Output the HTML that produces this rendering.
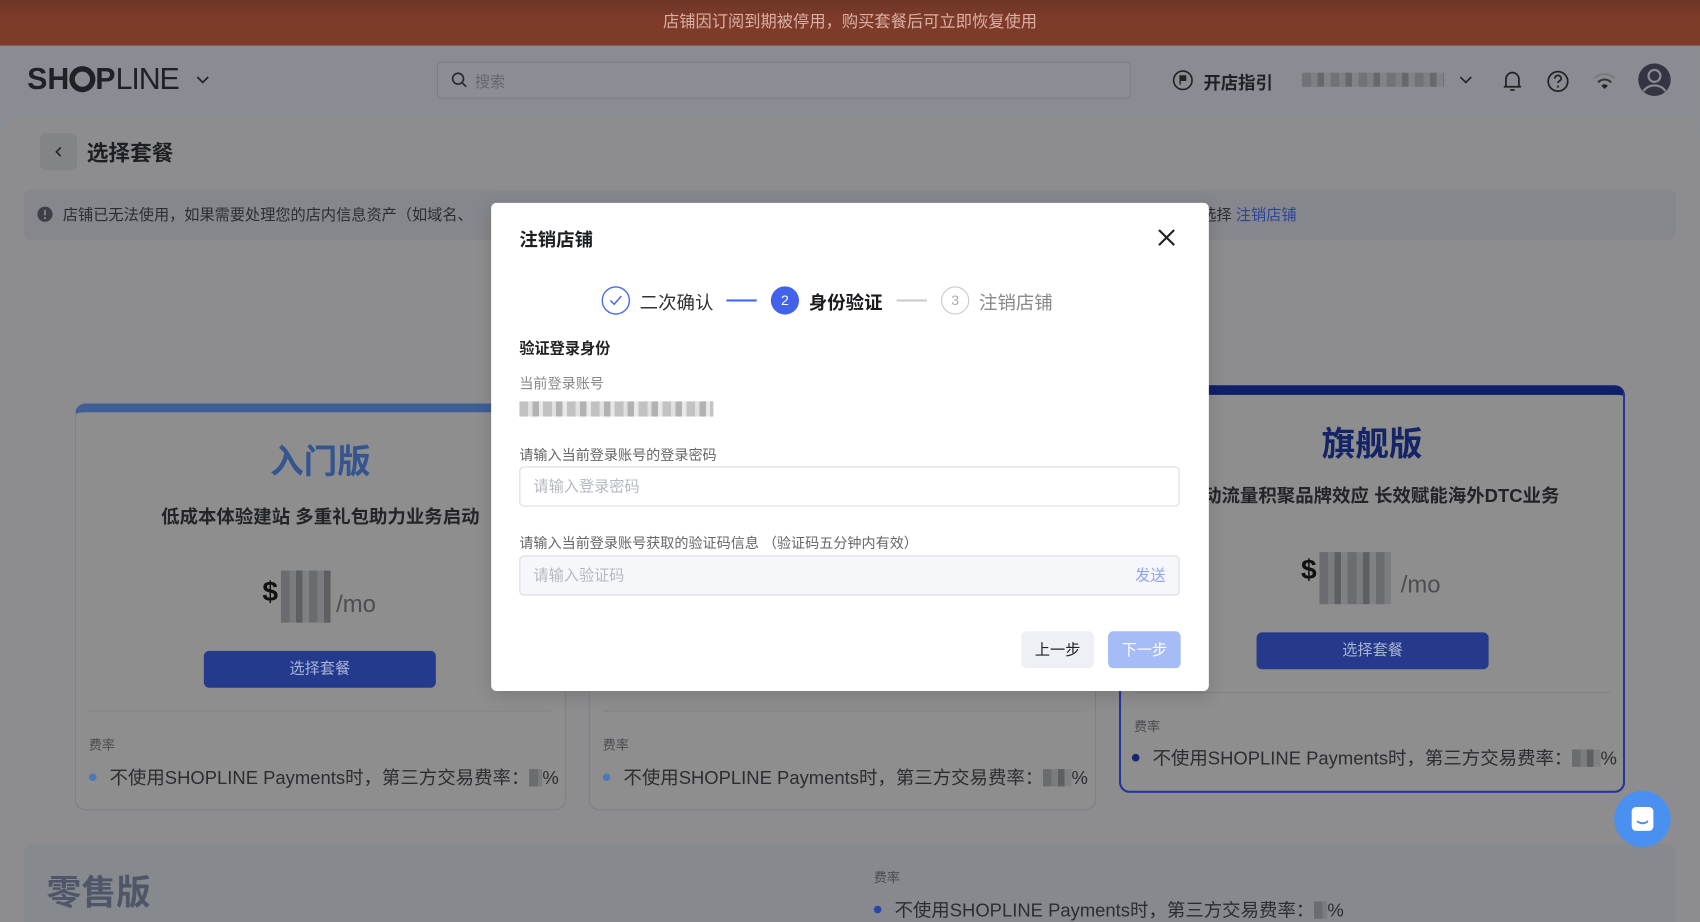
<!DOCTYPE html>
<html><head><meta charset="utf-8"><style>
*{box-sizing:border-box;margin:0;padding:0}
html,body{width:1700px;height:922px;overflow:hidden;background:#8b8c8f}
body{font-family:"Liberation Sans","Noto Sans CJK SC",sans-serif}
#w{position:absolute;left:0;top:0;width:1568px;height:850px;transform:scale(1.08418,1.08471);transform-origin:0 0;background:#8a8c93;overflow:hidden}
.a{position:absolute}
.blur{background:repeating-linear-gradient(90deg,#6b6c70 0 8px,#7b7c80 8px 14px,#5e5f63 14px 20px,#808185 20px 26px)}
.card{position:absolute;background:#8e8e8e;border:1px solid #7e7f83;border-radius:10px;overflow:hidden}
.ttl{position:absolute;width:100%;text-align:center;font-weight:bold;white-space:nowrap}
.btn{position:absolute;background:#263b8c;border-radius:5px;color:#a9b3d6;font-size:14px;text-align:center;line-height:33px}
.fee{position:absolute;font-size:12px;color:#4a4b4f}
.li{position:absolute;font-size:17px;color:#2c2d31;white-space:nowrap}
.dot{display:inline-block;width:7px;height:7px;border-radius:50%;margin-right:12px;vertical-align:3px}
.in{position:absolute;left:26px;width:609px;height:37px;border:1px solid #d8dbe3;border-radius:4px;font-size:14px;color:#b5b8c0;padding-left:12px;line-height:35px}
</style></head><body><div id="w">
<div class="a" style="left:0;top:0;width:1568px;height:42px;background:linear-gradient(#6e3526,#7e3b2a 40%);color:#d9b0a4;font-size:15px;text-align:center;line-height:42px">店铺因订阅到期被停用，购买套餐后可立即恢复使用</div>
<div class="a" style="left:25px;top:57px;font-size:28px;font-weight:bold;color:#1f2126">SH<span style="display:inline-block;width:24px;height:24px;border-radius:50%;border:5px solid #1f2126;vertical-align:-3px"></span>P<span style="font-weight:normal;letter-spacing:-1px">LINE</span></div>
<svg class="a" style="left:180px;top:68px" width="14" height="12"><path d="M2 3l5 5 5-5" fill="none" stroke="#222" stroke-width="1.6"/></svg>
<div class="a" style="left:403px;top:57px;width:640px;height:34px;border:1px solid #7c7e86;border-radius:4px;background:#8c8e95"></div>
<svg class="a" style="left:416px;top:66px" width="16" height="16"><circle cx="6.5" cy="6.5" r="5" fill="none" stroke="#2a2c31" stroke-width="1.6"/><path d="M10 10l4 4" stroke="#2a2c31" stroke-width="1.6"/></svg>
<div class="a" style="left:438px;top:65px;font-size:14px;color:#65676d">搜索</div>
<svg class="a" style="left:1081px;top:64px" width="20" height="20"><circle cx="10" cy="10" r="8.5" fill="none" stroke="#222" stroke-width="1.5"/><path d="M7.5 14V6h5v4h-5" fill="#222" stroke="#222" stroke-width="1.3"/></svg>
<div class="a" style="left:1110px;top:63px;font-size:16px;color:#1f2126;font-weight:bold">开店指引</div>
<div class="a blur" style="left:1201px;top:67px;width:131px;height:13px;opacity:.8"></div>
<svg class="a" style="left:1345px;top:68px" width="14" height="12"><path d="M2 3l5 5 5-5" fill="none" stroke="#222" stroke-width="1.5"/></svg>
<svg class="a" style="left:1384px;top:63px" width="22" height="24"><path d="M5 17V10a6 6 0 0112 0v7H5zM3 17h16M9 20h4M11 3v1" fill="none" stroke="#222" stroke-width="1.6"/></svg>
<svg class="a" style="left:1426px;top:64px" width="22" height="22"><circle cx="11" cy="11" r="9" fill="none" stroke="#222" stroke-width="1.6"/><path d="M8 8.5a3 3 0 116 0c0 2-3 2-3 4" fill="none" stroke="#222" stroke-width="1.6"/><circle cx="11" cy="15.8" r="1" fill="#222"/></svg>
<svg class="a" style="left:1469px;top:66px" width="22" height="18"><path d="M2 6a13 13 0 0118 0" fill="none" stroke="#777" stroke-width="1.6"/><path d="M5 10a8 8 0 0112 0" fill="none" stroke="#333" stroke-width="1.8"/><path d="M8 13l3 3 3-3a4 4 0 00-6 0z" fill="#222"/></svg>
<svg class="a" style="left:1510px;top:57px" width="32" height="33"><circle cx="16" cy="16.5" r="15" fill="#333642"/><circle cx="16" cy="13" r="5.5" fill="none" stroke="#8a8c93" stroke-width="2"/><path d="M6 27a11 9 0 0120 0" fill="none" stroke="#8a8c93" stroke-width="2"/></svg>
<div class="a" style="left:0;top:106px;width:1568px;height:760px;background:#8d8d8f;border-radius:22px 22px 0 0"></div>
<div class="a" style="left:37px;top:123px;width:34px;height:34px;background:#838488;border-radius:5px"></div>
<svg class="a" style="left:48px;top:134px" width="12" height="12"><path d="M8 2L4 6l4 4" fill="none" stroke="#222" stroke-width="1.5"/></svg>
<div class="a" style="left:80px;top:125px;font-size:20px;font-weight:bold;color:#1d1f24">选择套餐</div>
<div class="a" style="left:22px;top:175px;width:1524px;height:46px;background:#86878c;border-radius:6px"></div>
<svg class="a" style="left:34px;top:190px" width="15" height="15"><circle cx="7.5" cy="7.5" r="7" fill="#3e4049"/><path d="M7.5 3.5v5" stroke="#86878c" stroke-width="1.6"/><circle cx="7.5" cy="11" r="1" fill="#86878c"/></svg>
<div class="a" style="left:58px;top:188px;font-size:14px;color:#2c2d31;white-space:nowrap">店铺已无法使用，如果需要处理您的店内信息资产（如域名、</div>
<div class="a" style="left:1108px;top:188px;font-size:14px;color:#2c2d31;white-space:nowrap">选择 <span style="color:#2b4698">注销店铺</span></div>

<div class="card" style="left:69px;top:372px;width:453px;height:375px;border-top:8px solid #3d5f95">
 <div class="ttl" style="top:20px;font-size:31px;color:#34558f">入门版</div>
 <div class="ttl" style="top:82px;font-size:17px;color:#232428">低成本体验建站 多重礼包助力业务启动</div>
 <div class="a" style="left:172px;top:150px;font-size:26px;font-weight:bold;color:#111">$</div>
 <div class="a blur" style="left:189px;top:146px;width:46px;height:48px"></div>
 <div class="a" style="left:240px;top:164px;font-size:22px;color:#4c4d51">/mo</div>
 <div class="btn" style="left:118px;top:220px;width:214px;height:34px;background:#243a8d">选择套餐</div>
 <div class="a" style="left:12px;top:275px;width:426px;height:1px;background:#828387"></div>
 <div class="fee" style="left:12px;top:298px">费率</div>
 <div class="li" style="left:12px;top:323px"><span class="dot" style="background:#4a79b5"></span>不使用SHOPLINE Payments时，第三方交易费率：<span class="blur" style="display:inline-block;width:12px;height:16px;vertical-align:-2px"></span>%</div>
</div>
<div class="card" style="left:543px;top:372px;width:468px;height:375px;border-top:8px solid #3d5f95">
 <div class="a" style="left:12px;top:275px;width:441px;height:1px;background:#828387"></div>
 <div class="fee" style="left:12px;top:298px">费率</div>
 <div class="li" style="left:12px;top:323px"><span class="dot" style="background:#4a79b5"></span>不使用SHOPLINE Payments时，第三方交易费率：<span class="blur" style="display:inline-block;width:26px;height:16px;vertical-align:-2px"></span>%</div>
</div>
<div class="card" style="left:1032px;top:355px;width:467px;height:376px;border:2px solid #24359a;border-top:9px solid #0f1f6a">
 <div class="ttl" style="top:20px;font-size:31px;color:#142466">旗舰版</div>
 <div class="ttl" style="top:79px;font-size:17px;color:#232428">推动流量积聚品牌效应 长效赋能海外DTC业务</div>
 <div class="a" style="left:166px;top:146px;font-size:26px;font-weight:bold;color:#111">$</div>
 <div class="a blur" style="left:183px;top:145px;width:66px;height:48px"></div>
 <div class="a" style="left:258px;top:162px;font-size:22px;color:#4c4d51">/mo</div>
 <div class="btn" style="left:125px;top:219px;width:214px;height:34px;background:#253a8a">选择套餐</div>
 <div class="a" style="left:12px;top:274px;width:440px;height:1px;background:#828387"></div>
 <div class="fee" style="left:12px;top:297px">费率</div>
 <div class="li" style="left:10px;top:321px"><span class="dot" style="background:#17246e"></span>不使用SHOPLINE Payments时，第三方交易费率：<span class="blur" style="display:inline-block;width:26px;height:16px;vertical-align:-2px"></span>%</div>
</div>
<div class="a" style="left:22px;top:778px;width:1524px;height:80px;background:#86898e;border-radius:8px"></div>
<div class="a" style="left:43px;top:798px;font-size:32px;font-weight:bold;color:#4f5668">零售版</div>
<div class="fee" style="left:806px;top:800px">费率</div>
<div class="li" style="left:806px;top:825px"><span class="dot" style="background:#2a44a8"></span>不使用SHOPLINE Payments时，第三方交易费率：<span class="blur" style="display:inline-block;width:12px;height:16px;vertical-align:-2px"></span>%</div>
<div class="a" style="left:1489px;top:729px;width:52px;height:52px;border-radius:50%;background:#4a90f0"></div>
<svg class="a" style="left:1503px;top:742px" width="24" height="26"><rect x="2" y="2" width="20" height="22" rx="4" fill="#fff"/><path d="M7 15q5 4 10 0" fill="none" stroke="#4a90f0" stroke-width="1.8"/></svg>

<div class="a" style="left:453px;top:187px;width:662px;height:450px;background:#fff;border-radius:5px;box-shadow:0 4px 16px rgba(0,0,0,.15)">
 <div class="a" style="left:26px;top:20px;font-size:17px;font-weight:bold;color:#1d1f24">注销店铺</div>
 <svg class="a" style="left:614px;top:23px" width="18" height="18"><path d="M2 2l14 14M16 2L2 16" stroke="#222" stroke-width="2"/></svg>
 <svg class="a" style="left:101px;top:76px" width="28" height="28"><circle cx="14" cy="14" r="12.5" fill="none" stroke="#4a6cf0" stroke-width="1.3"/><path d="M9 14l3.5 3.5L19 10" fill="none" stroke="#4a6cf0" stroke-width="1.4"/></svg>
 <div class="a" style="left:137px;top:78px;font-size:17px;color:#333">二次确认</div>
 <div class="a" style="left:217px;top:89px;width:28px;height:1.5px;background:#4a6cf0"></div>
 <div class="a" style="left:258px;top:77px;width:26px;height:26px;border-radius:50%;background:#4262ec;color:#fff;font-size:13px;text-align:center;line-height:26px">2</div>
 <div class="a" style="left:293px;top:78px;font-size:17px;color:#1a1b1f;font-weight:bold">身份验证</div>
 <div class="a" style="left:374px;top:89px;width:28px;height:1.5px;background:#ccc"></div>
 <div class="a" style="left:415px;top:77px;width:26px;height:26px;border-radius:50%;border:1.3px solid #c8c9cc;color:#aaa;font-size:13px;text-align:center;line-height:24px">3</div>
 <div class="a" style="left:450px;top:78px;font-size:17px;color:#888">注销店铺</div>
 <div class="a" style="left:26px;top:124px;font-size:14px;font-weight:bold;color:#222">验证登录身份</div>
 <div class="a" style="left:26px;top:156px;font-size:13px;color:#888">当前登录账号</div>
 <div class="a" style="left:26px;top:183px;width:179px;height:14px;background:repeating-linear-gradient(90deg,#bbb 0 8px,#ddd 8px 12px,#aaa 12px 18px,#e6e6e6 18px 22px);opacity:.9"></div>
 <div class="a" style="left:26px;top:222px;font-size:13px;color:#666">请输入当前登录账号的登录密码</div>
 <div class="in" style="top:243px">请输入登录密码</div>
 <div class="a" style="left:26px;top:303px;font-size:13px;color:#666">请输入当前登录账号获取的验证码信息 （验证码五分钟内有效）</div>
 <div class="in" style="top:325px;background:#f6f7fa">请输入验证码<span style="position:absolute;right:12px;color:#8ea3ea">发送</span></div>
 <div class="a" style="left:489px;top:395px;width:67px;height:34px;background:#eef0f5;border-radius:5px;font-size:14px;text-align:center;line-height:34px;color:#222">上一步</div>
 <div class="a" style="left:569px;top:395px;width:67px;height:34px;background:#a6bcf7;border-radius:5px;font-size:14px;text-align:center;line-height:34px;color:#fff">下一步</div>
</div>
</div></body></html>
